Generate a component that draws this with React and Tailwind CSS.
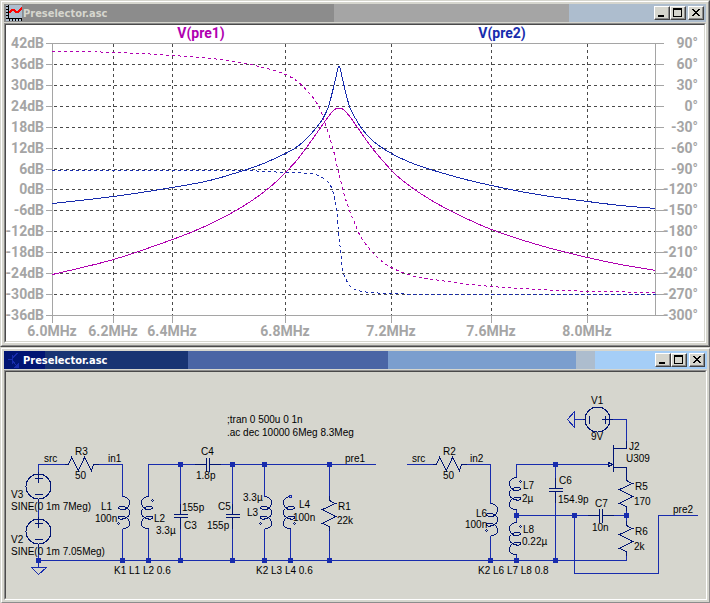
import React from "react";
import clsx from "clsx";

const GRID_ROWS = Array.from({ length: 14 }, (_, i) => ({
  y: Math.round(43 + (i * 272) / 13),
  gain: `${42 - i * 6}dB`,
  phase: `${90 - i * 30}°`,
}));

const GRID_COLS = [
  { x: 52, label: "6.0MHz" },
  { x: 113, label: "6.2MHz" },
  { x: 172, label: "6.4MHz" },
  { x: 285, label: "6.8MHz" },
  { x: 391, label: "7.2MHz" },
  { x: 491, label: "7.6MHz" },
  { x: 587, label: "8.0MHz" },
];

const TRACES = [
  {
    id: "pre1-phase",
    className: "stroke-[#b000b0]",
    dashed: true,
    points: [
      [52, 51], [88, 51], [110, 52], [140, 53], [172, 55], [200, 57], [220, 59],
      [240, 62], [250, 64], [270, 69], [285, 74], [297, 81], [308, 92],
      [316, 102], [322, 115], [328, 133], [333, 150], [336, 163], [340, 179],
      [344, 195], [349, 210], [354, 222], [358, 232], [364, 242], [374, 254],
      [383, 262], [391, 267], [402, 272], [415, 276], [440, 280], [470, 284],
      [491, 286], [520, 288], [560, 290], [600, 291], [655, 292],
    ],
  },
  {
    id: "pre2-phase",
    className: "stroke-[#182cad]",
    dashed: true,
    points: [
      [52, 170], [240, 170], [285, 172], [310, 173], [320, 176], [326, 180],
      [330, 185], [333, 193], [336, 208], [338, 230], [340, 250], [342, 268],
      [345, 278], [350, 286], [358, 290], [370, 292], [391, 293], [430, 294],
      [655, 294],
    ],
  },
  {
    id: "pre1-gain",
    className: "stroke-[#b000b0]",
    points: [
      [52, 274], [113, 259], [172, 239], [202, 227], [232, 212], [250, 201],
      [264, 191], [277, 180], [285, 172], [297, 159], [306, 147], [316, 133],
      [323, 123], [328, 116], [333, 110], [336, 108], [341, 108], [344, 110],
      [350, 117], [357, 127], [372, 148], [391, 170], [402, 180], [420, 193],
      [440, 205], [470, 220], [491, 229], [520, 239], [547, 247], [587, 257],
      [620, 264], [655, 270],
    ],
  },
  {
    id: "pre2-gain",
    className: "stroke-[#182cad]",
    points: [
      [52, 203], [113, 196], [172, 187], [209, 180], [240, 171], [263, 163],
      [285, 153], [294, 148], [302, 142], [309, 135], [316, 127], [323, 117],
      [328, 106], [333, 87], [336, 74], [338, 66], [339, 66], [341, 74],
      [344, 87], [349, 106], [355, 118], [362, 129], [373, 141], [391, 153],
      [410, 162], [430, 169], [465, 179], [491, 185], [520, 191], [550, 196],
      [587, 201], [620, 205], [655, 208],
    ],
  },
];

const WIRES = [
  "M38 473V464H68",
  "M38 498V518",
  "M38 544V567",
  "M93 464H122V496",
  "M122 528V560",
  "M148 496V464H206",
  "M148 528V560",
  "M180 464V514",
  "M180 518V560",
  "M209 464H375",
  "M232 464V514",
  "M232 518V560",
  "M264 464V496",
  "M264 528V560",
  "M290 528V560",
  "M329 464V497",
  "M329 526V560",
  "M38 560H626V552",
  "M406 464H436",
  "M461 464H490V503",
  "M490 535V560",
  "M516 477V464H608",
  "M516 509V522",
  "M516 554V560",
  "M555 464V488",
  "M555 492V560",
  "M516 515H598",
  "M602 515H626V506",
  "M626 515V525",
  "M574 515V573H658V515H697",
  "M626 440V419H610",
  "M574 419H584",
];

const NODES = [
  [38, 560], [122, 560], [148, 560], [180, 464], [180, 560], [232, 464],
  [232, 560], [264, 464], [264, 560], [290, 560], [329, 464], [329, 560],
  [490, 560], [516, 560], [516, 515], [555, 464], [555, 560], [574, 515],
  [626, 515],
];

const LABELS = [
  [75, 455, "R3"], [75, 479, "50"], [44, 462, "src"], [108, 462, "in1"],
  [11, 498, "V3"], [11, 510, "SINE(0 1m 7Meg)"],
  [11, 543, "V2"], [11, 555, "SINE(0 1m 7.05Meg)"],
  [101, 510, "L1"], [95, 522, "100n"], [154, 522, "L2"], [156, 534, "3.3µ"],
  [182, 511, "155p"], [184, 529, "C3"], [218, 510, "C5"], [207, 529, "155p"],
  [201, 455, "C4"], [196, 479, "1.8p"], [114, 574, "K1 L1 L2 0.6"],
  [227, 423, ";tran 0 500u 0 1n"], [227, 436, ".ac dec 10000 6Meg 8.3Meg"],
  [345, 462, "pre1"], [243, 501, "3.3µ"], [247, 516, "L3"],
  [299, 508, "L4"], [293, 521, "100n"], [338, 510, "R1"], [337, 524, "22k"],
  [256, 574, "K2 L3 L4 0.6"],
  [412, 462, "src"], [443, 455, "R2"], [443, 479, "50"], [470, 462, "in2"],
  [476, 517, "L6"], [465, 528, "100n"], [523, 489, "L7"], [522, 502, "2µ"],
  [523, 533, "L8"], [522, 545, "0.22µ"], [478, 574, "K2 L6 L7 L8 0.8"],
  [559, 484, "C6"], [558, 503, "154.9p"], [595, 507, "C7"], [592, 531, "10n"],
  [591, 404, "V1"], [591, 440, "9V"], [629, 450, "J2"], [626, 462, "U309"],
  [635, 490, "R5"], [634, 505, "170"], [635, 535, "R6"], [634, 550, "2k"],
  [673, 513, "pre2"],
];

// Catmull-Rom through the sample points
function smoothPath(points) {
  let d = `M${points[0][0]} ${points[0][1]}`;
  for (let i = 0; i < points.length - 1; i++) {
    const p0 = points[i - 1] || points[i];
    const p1 = points[i];
    const p2 = points[i + 1];
    const p3 = points[i + 2] || p2;
    const h = (p2[0] - p1[0]) / 3;
    const m1 = (p2[1] - p0[1]) / (p2[0] - p0[0]);
    const m2 = (p3[1] - p1[1]) / (p3[0] - p1[0]);
    d += `C${p1[0] + h} ${p1[1] + m1 * h} ${p2[0] - h} ${p2[1] - m2 * h} ${p2[0]} ${p2[1]}`;
  }
  return d;
}

function PlotIcon() {
  return (
    <svg width="16" height="16" viewBox="0 0 16 16" shapeRendering="crispEdges">
      <rect width="16" height="16" fill="#adbdce" />
      <path
        d="M2.5 0V14M0 13.5H16M0 1.5H2M0 4.5H2M0 7.5H2M0 10.5H2M3.5 14V16M6.5 14V16M9.5 14V16M12.5 14V16M15.5 14V16"
        stroke="#000"
        fill="none"
      />
      <path d="M3 8L6 5H8L10 7H12L16 3" stroke="#f00" strokeWidth="1.5" fill="none" />
    </svg>
  );
}

function TransistorIcon() {
  return (
    <svg width="16" height="16" viewBox="0 0 16 16" shapeRendering="crispEdges">
      <path d="M2 7.5H6M6.5 3V12M7 5.5L11.5 1M7 9.5L12 15" stroke="#182cad" fill="none" />
      <path d="M12.5 15.5H8L12.5 11Z" fill="#182cad" />
    </svg>
  );
}

function CaptionButton({ label, children, className }) {
  return (
    <button
      type="button"
      aria-label={label}
      className={clsx(
        "h-[14px] w-4 border border-t-white border-l-white border-r-[#424242] border-b-[#424242] bg-[#d6d6ce] shadow-[inset_-1px_-1px_0_#8c8c8c]",
        className
      )}
    >
      <svg width="14" height="12" viewBox="0 0 14 12" shapeRendering="crispEdges">
        {children}
      </svg>
    </button>
  );
}

function Window({ title, icon, barClass, titleClass, className, children }) {
  return (
    <section
      className={clsx(
        "border border-t-[#d6d6ce] border-l-[#d6d6ce] border-r-[#4a4a4a] border-b-[#4a4a4a]",
        className
      )}
    >
      <div className="border border-t-white border-l-white border-r-[#8c8c8c] border-b-[#8c8c8c] bg-[#d6d6ce] p-[2px]">
        <header className={clsx("mb-px flex h-[18px] items-center pr-[2px] pl-[2px]", barClass)}>
          {icon}
          <h1
            className={clsx(
              "ml-px flex-1 pt-px font-['DejaVu_Sans_Condensed','DejaVu_Sans',sans-serif] text-[11px] leading-[17px] font-bold",
              titleClass
            )}
          >
            {title}
          </h1>
          <div className="flex">
            <CaptionButton label="Minimize">
              <path d="M3 8H9V10H3Z" />
            </CaptionButton>
            <CaptionButton label="Maximize">
              <path d="M2 1H11V10H2ZM3 3V9H10V3Z" fillRule="evenodd" />
            </CaptionButton>
            <CaptionButton label="Close" className="ml-[2px]">
              <path d="M3 2h2v1h1v1h2v-1h1v-1h2v1h-1v1h-1v1h-1v1h1v1h1v1h1v1h-2v-1h-1v-1h-2v1h-1v1h-2v-1h1v-1h1v-1h1v-1h-1v-1h-1v-1h-1z" />
            </CaptionButton>
          </div>
        </header>
        <div className="border border-t-[#8c8c8c] border-l-[#8c8c8c] border-r-white border-b-white">
          <div className="border border-t-[#4a4a4a] border-l-[#4a4a4a] border-r-[#d6d6ce] border-b-[#d6d6ce]">
            {children}
          </div>
        </div>
      </div>
    </section>
  );
}

function BodePlot() {
  return (
    <svg
      viewBox="6 25 698 316"
      className="block h-auto w-full bg-white font-[Roboto,sans-serif] text-[14px] font-bold"
    >
      <g transform="translate(0.5 0.5)" fill="none" shapeRendering="crispEdges">
        <g className="stroke-[#4a4a4a]" strokeDasharray="3 3">
          {GRID_ROWS.slice(1, -1).map((row) => (
            <path key={row.y} d={`M53 ${row.y}H655`} />
          ))}
          {GRID_COLS.slice(1).map((col) => (
            <path key={col.x} d={`M${col.x} 43V315`} />
          ))}
        </g>
        <g className="stroke-[#a5a5a5]">
          <path d="M52 43H655V315H52Z" />
          {GRID_ROWS.map((row) => (
            <path key={row.y} d={`M45 ${row.y}H52M655 ${row.y}H663`} />
          ))}
          {GRID_COLS.map((col) => (
            <path key={col.x} d={`M${col.x} 315V322`} />
          ))}
        </g>
        {TRACES.map((trace) => (
          <path
            key={trace.id}
            d={smoothPath(trace.points)}
            className={trace.className}
            strokeDasharray={trace.dashed ? "3 3" : undefined}
          />
        ))}
      </g>
      <g className="fill-[#a5a5a5]">
        {GRID_ROWS.map((row) => (
          <React.Fragment key={row.y}>
            <text x="44" y={row.y + 5} textAnchor="end">
              {row.gain}
            </text>
            <text x="698" y={row.y + 5} textAnchor="end">
              {row.phase}
            </text>
          </React.Fragment>
        ))}
        {GRID_COLS.map((col) => (
          <text key={col.x} x={col.x} y="336" textAnchor="middle">
            {col.label}
          </text>
        ))}
      </g>
      <text x="201" y="38" textAnchor="middle" className="fill-[#b000b0]">
        V(pre1)
      </text>
      <text x="502" y="38" textAnchor="middle" className="fill-[#182cad]">
        V(pre2)
      </text>
    </svg>
  );
}

// Coil drawn downwards from (x, y); flip mirrors it to the left
function Inductor({ x, y, flip, dotY }) {
  return (
    <g transform={`translate(${x} ${y}) scale(${flip ? -1 : 1} 1)`}>
      <path d="M0 0C4 0 7 3 7 6C7 9 5 12 2 13C-1 13 -4 13 -4 11C-4 10 2 9 5 12C7 13 7 14 7 16C7 19 5 21 2 22C-1 23 -4 23 -4 21C-4 19 2 19 5 22C7 24 7 25 7 27C7 30 4 32 0 32" />
      <path d={`M-5 ${dotY}l1 -1l1 1l-1 1z`} />
    </g>
  );
}

function Resistor({ x, y, horizontal }) {
  return (
    <path
      transform={`translate(${x} ${y})`}
      d={
        horizontal
          ? "M-4 0H0L3 -7L10 6L16 -7L23 6L25 0H30"
          : "M0 -4V0L1 2L6 4L-7 10L6 17L-7 24L0 27V31"
      }
    />
  );
}

function Capacitor({ x, y, horizontal }) {
  return (
    <path
      transform={`translate(${x} ${y})`}
      d={horizontal ? "M0 -7V7M3 -7V7M-12 0H0M3 0H14" : "M-7 0H7M-7 3H7M0 -11V0M0 3V14"}
    />
  );
}

function Source({ x, y, rotated }) {
  return (
    <g transform={`translate(${x} ${y}) rotate(${rotated ? 90 : 0})`}>
      <circle r="12.5" />
      <path d="M-4 -8H4M0 -15V-4M-4 8H4M0 12V15" />
    </g>
  );
}

function Schematic() {
  return (
    <svg
      viewBox="6 372 699 226"
      className="block h-auto w-full bg-[#d6d6ce] font-['Liberation_Sans',Arial,sans-serif] text-[10px]"
    >
      <g transform="translate(0.5 0.5)" fill="none" shapeRendering="crispEdges">
        <g className="stroke-[#182cad]">
          {WIRES.map((d) => (
            <path key={d} d={d} />
          ))}
          <path d="M31 567H46L38 574Z" />
          <path d="M574 411V427L567 419Z" />
        </g>
        <g className="stroke-[#001473]">
          <Source x={38} y={486} />
          <Source x={38} y={531} />
          <Source x={597} y={419} rotated />
          <Resistor x={68} y={464} horizontal />
          <Resistor x={436} y={464} horizontal />
          <Resistor x={329} y={499} />
          <Resistor x={626} y={479} />
          <Resistor x={626} y={524} />
          <Capacitor x={206} y={464} horizontal />
          <Capacitor x={599} y={515} horizontal />
          <Capacitor x={180} y={514} />
          <Capacitor x={232} y={514} />
          <Capacitor x={555} y={488} />
          <Inductor x={122} y={496} dotY={27} />
          <Inductor x={148} y={496} dotY={4} flip />
          <Inductor x={264} y={496} dotY={27} />
          <Inductor x={290} y={496} dotY={27} flip />
          <Inductor x={490} y={503} dotY={27} />
          <Inductor x={516} y={477} dotY={4} flip />
          <Inductor x={516} y={522} dotY={4} flip />
          <path d="M289 495H291V497H289Z" className="fill-[#d6d6ce] stroke-[#182cad]" />
          <path d="M613 444V471M613 448H626V440M613 467H626V480" />
          <path d="M608 462L612 464L608 466Z" className="fill-[#d6d6ce]" />
        </g>
        <g className="fill-[#182cad]">
          {NODES.map(([x, y]) => (
            <rect key={`${x}-${y}`} x={x - 2.5} y={y - 2.5} width="5" height="5" />
          ))}
        </g>
      </g>
      {LABELS.map(([x, y, text]) => (
        <text key={`${x}-${y}`} x={x} y={y} className="fill-black">
          {text}
        </text>
      ))}
    </svg>
  );
}

function App() {
  return (
    <main className="flex min-h-screen flex-col overflow-hidden bg-[#d6d6ce]">
      <Window
        title="Preselector.asc"
        icon={<PlotIcon />}
        titleClass="text-[#d6d6ce]"
        barClass="bg-[linear-gradient(to_right,#8c8c8c_47%,#a5a5a5_47%,#a5a5a5_80.5%,#adbdce_80.5%)]"
      >
        <BodePlot />
      </Window>
      <Window
        title="Preselector.asc"
        icon={<TransistorIcon />}
        titleClass="text-white"
        className="-mr-px -mb-px"
        barClass="bg-[linear-gradient(to_right,#001473_5.8%,#183473_5.8%,#183473_26.2%,#4a65a5_26.2%,#4a65a5_54.6%,#7b9ece_54.6%,#7b9ece_81.4%,#adbdce_81.4%,#adbdce_84%,#a5cef7_84%)]"
      >
        <Schematic />
      </Window>
    </main>
  );
}

export default App;
